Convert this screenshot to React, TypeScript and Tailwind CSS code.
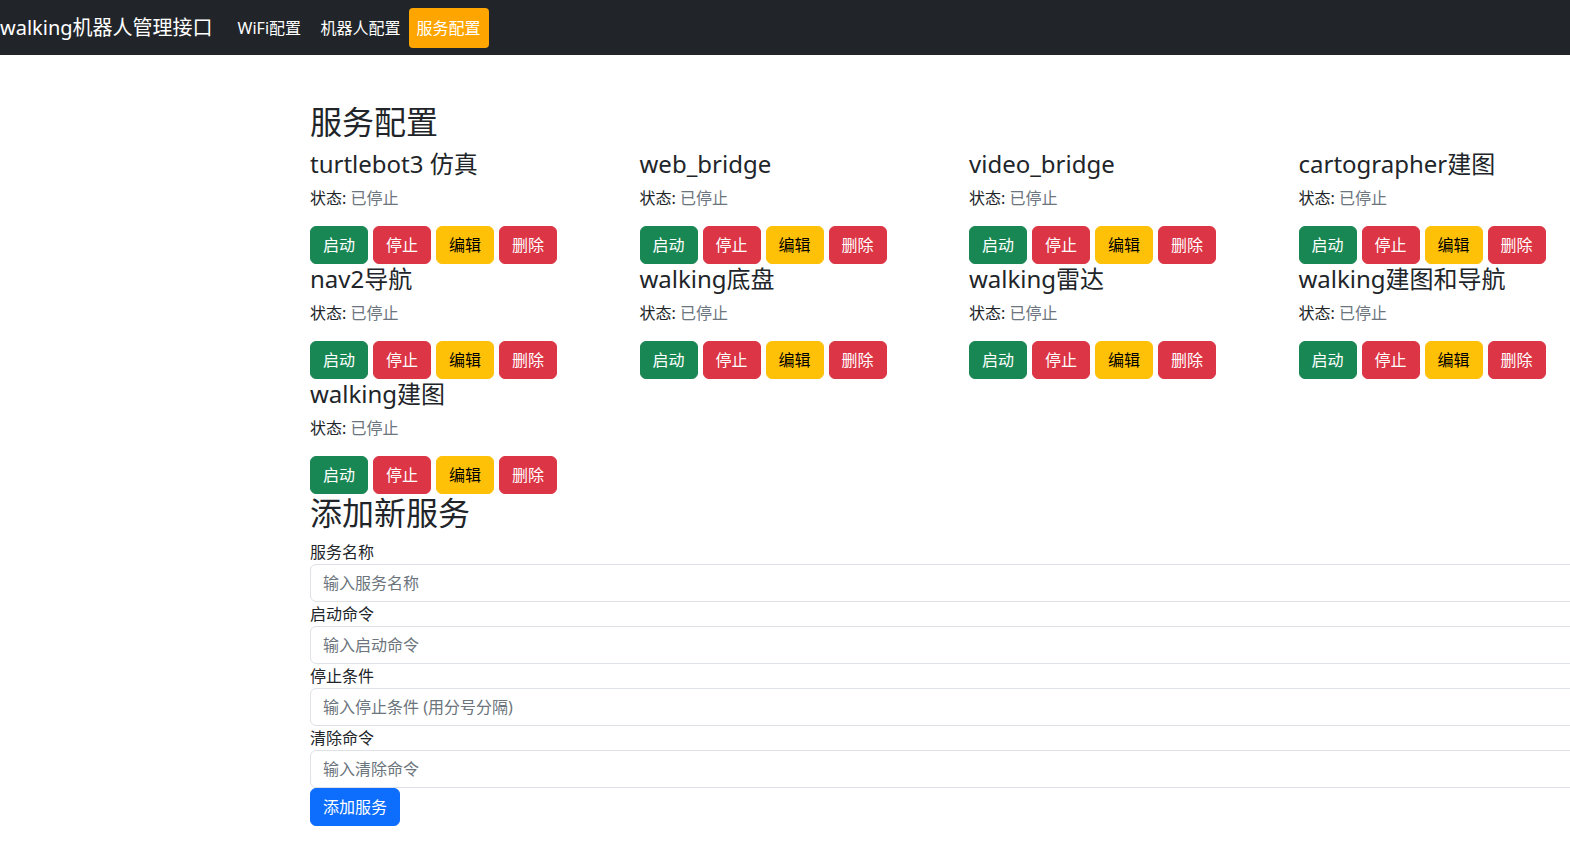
import React from 'react';

const services = [
  'turtlebot3 仿真',
  'web_bridge',
  'video_bridge',
  'cartographer建图',
  'nav2导航',
  'walking底盘',
  'walking雷达',
  'walking建图和导航',
  'walking建图',
];

const fields = [
  { label: '服务名称', placeholder: '输入服务名称' },
  { label: '启动命令', placeholder: '输入启动命令' },
  { label: '停止条件', placeholder: '输入停止条件 (用分号分隔)' },
  { label: '清除命令', placeholder: '输入清除命令' },
];

function ServiceCard({ name }: { name: string }) {
  return (
    <div>
      <h4 className="mb-2 text-[24px] leading-[29px] font-normal">{name}</h4>
      <p className="mb-4 text-base leading-6">
        状态: <span className="text-[#6c757d]">已停止</span>
      </p>
      <div className="flex gap-[5px]">
        <button className="rounded-md border border-[#198754] bg-[#198754] px-3 py-1.5 text-base leading-6 text-white">启动</button>
        <button className="rounded-md border border-[#dc3545] bg-[#dc3545] px-3 py-1.5 text-base leading-6 text-white">停止</button>
        <button className="rounded-md border border-[#ffc107] bg-[#ffc107] px-3 py-1.5 text-base leading-6 text-black">编辑</button>
        <button className="rounded-md border border-[#dc3545] bg-[#dc3545] px-3 py-1.5 text-base leading-6 text-white">删除</button>
      </div>
    </div>
  );
}

export default function App() {
  return (
    <div className="w-full overflow-hidden bg-white font-['Segoe_UI','Noto_Sans','Noto_Sans_CJK_SC',sans-serif] text-[#212529]">
      {/* Navbar */}
      <nav className="flex h-[55px] items-center whitespace-nowrap bg-[#212529] py-2">
        <span className="mr-[17px] text-[20px] leading-[30px] text-white">walking机器人管理接口</span>
        <a className="w-[83px] shrink-0 px-2 py-2 text-base leading-6 text-white">WiFi配置</a>
        <a className="w-[96px] shrink-0 px-2 py-2 text-base leading-6 text-white">机器人配置</a>
        <a className="w-[80px] shrink-0 rounded-[4px] bg-[#ffa500] px-2 py-2 text-base leading-6 text-white">服务配置</a>
      </nav>

      <div className="ml-[310px] mt-12 w-[1320px]">
        <h2 className="mb-2 text-[32px] leading-[38px] font-normal">服务配置</h2>

        {/* Service list */}
        <div className="grid w-[1318px] grid-cols-4">
          {services.map((s) => (
            <ServiceCard key={s} name={s} />
          ))}
        </div>

        {/* Add service form */}
        <h2 className="mb-2 text-[32px] leading-[38px] font-normal">添加新服务</h2>
        <form>
          {fields.map((f) => (
            <div key={f.label}>
              <label className="block text-base leading-6">{f.label}</label>
              <input
                className="block h-[38px] w-full rounded-md border border-[#dee2e6] px-3 py-1.5 text-base leading-6 placeholder:text-[#6c757d] outline-none"
                placeholder={f.placeholder}
              />
            </div>
          ))}
          <button type="button" className="rounded-md border border-[#0d6efd] bg-[#0d6efd] px-3 py-1.5 text-base leading-6 text-white">
            添加服务
          </button>
        </form>
      </div>
    </div>
  );
}
